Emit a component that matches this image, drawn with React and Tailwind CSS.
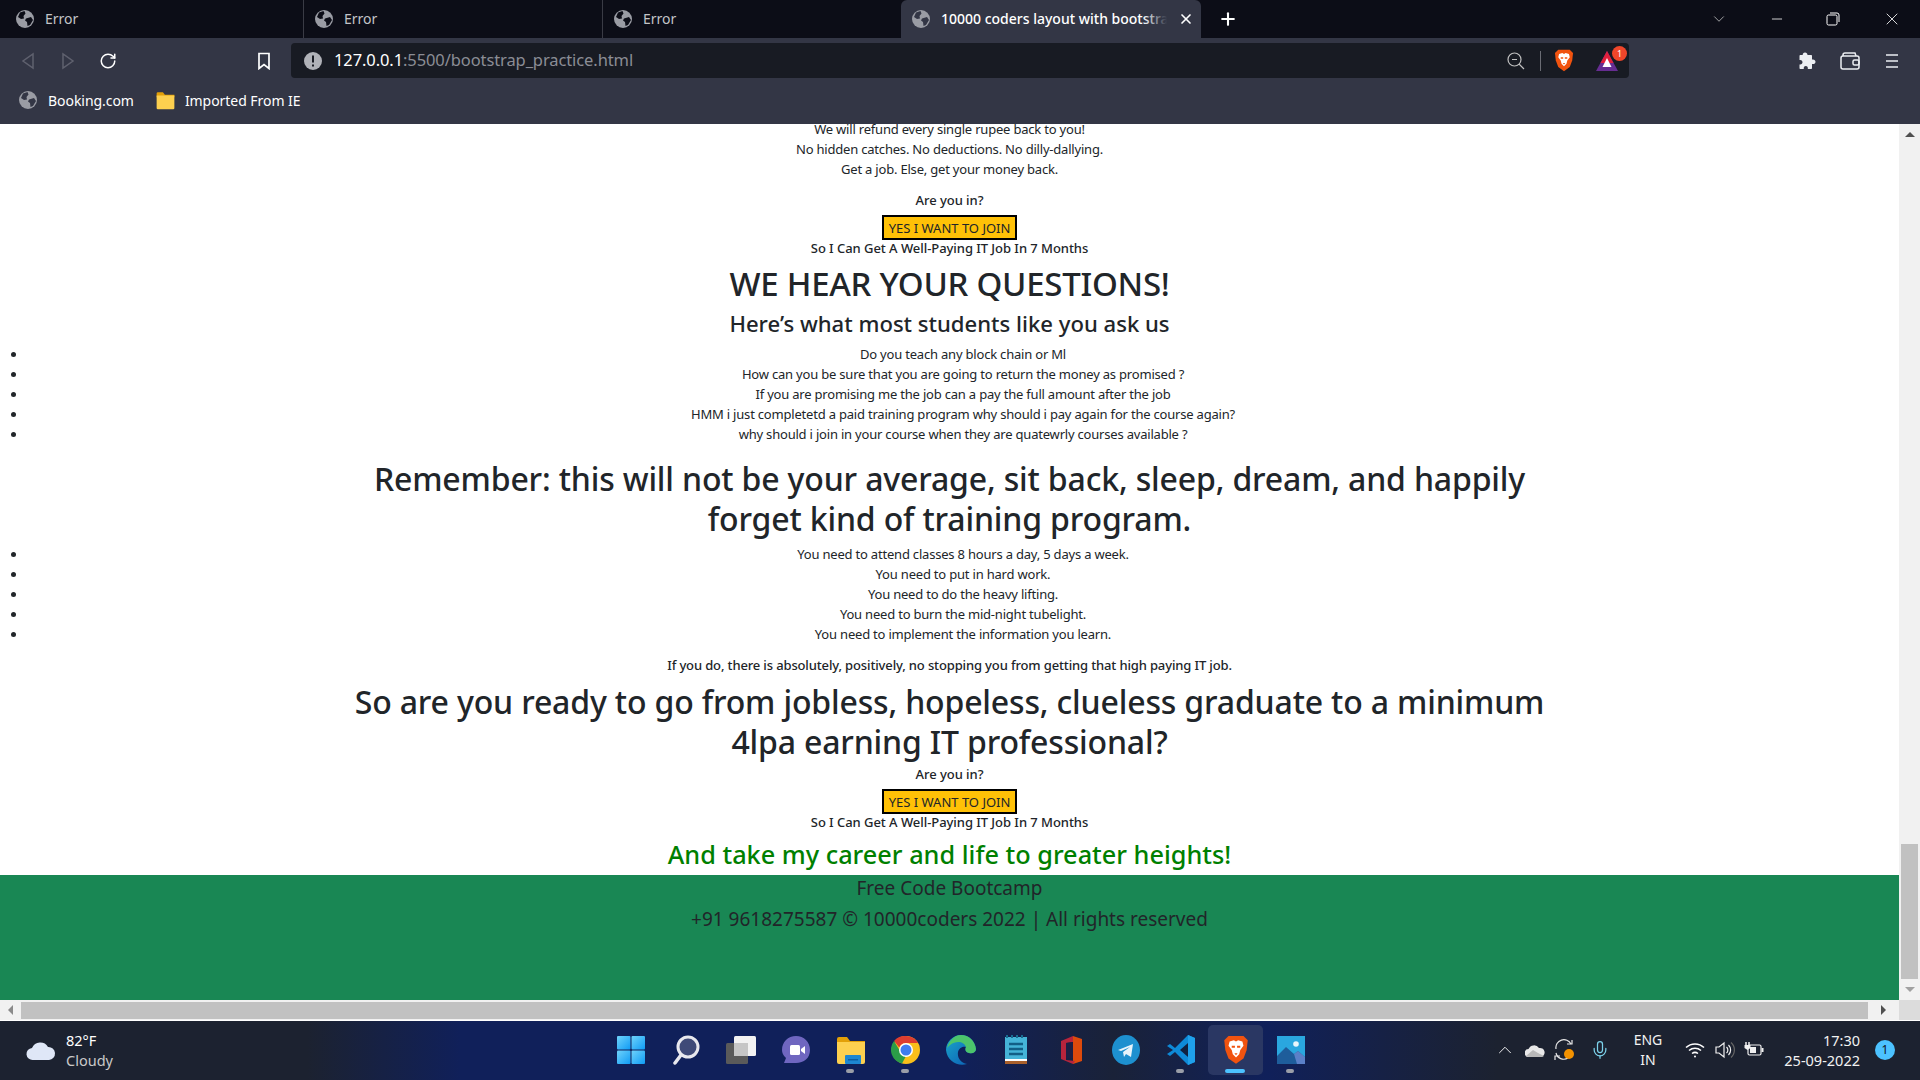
import { ChevronDown, ChevronUp, Minus, Plus, RotateCw, X, Mic } from 'lucide-react';

const FONT = "font-['Noto_Sans','Open_Sans',sans-serif]";
const BODY = 'text-[13px] leading-[20px] tracking-[-0.2px]';
const BOLD = 'text-[13px] leading-[20px] font-medium tracking-[-0.05px]';
const BIG = 'text-[32px] leading-[40px] font-medium tracking-[-0.16px]';

/* --- browser chrome icons --- */
function Globe({ size = 18, fill = '#9a9ca4', cut = '#0c0d17' }) {
  return (
    <svg width={size} height={size} viewBox="0 0 18 18" className="shrink-0">
      <circle cx="9" cy="9" r="9" fill={fill} />
      <path d="M4 2.500 8.500 1l1 2.500-2 2.500.5 2.500-3 .5L2 7z" fill={cut} />
      <path d="M10 8.500l5-1.500 2 3-3 5-2.500 1-.5-4-2-1.500z" fill={cut} />
    </svg>
  );
}

function BraveLion({ size = 24 }) {
  return (
    <svg width={size} height={size * 1.15} viewBox="0 0 24 28">
      <path d="M5 1h14l4 4-1 9-3 8-7 5-7-5-3-8-1-9z" fill="#f1530f" />
      <path d="M6 6l4-1 2 1 2-1 4 1 1 4-3 4-1 4-3 3-3-3-1-4-3-4z" fill="#fff" />
      <path d="M8 10h3v2H8zM13 10h3v2h-3zM10.500 17h3l-1.500 2z" fill="#f1530f" />
    </svg>
  );
}

function BatIcon() {
  return (
    <svg width="24" height="22" viewBox="0 0 24 22">
      <path d="M12 1 23 21H1z" fill="#662d91" />
      <path d="M12 1 18.500 13h-13z" fill="#e0203c" />
      <path d="M12 8l4.500 9h-9z" fill="#fff" />
    </svg>
  );
}

function PuzzleIcon() {
  return (
    <svg width="20" height="20" viewBox="0 0 20 20" fill="#eceef2">
      <path d="M8 1.500c1.500 0 2.500 1 2.500 2.500H14c.6 0 1 .4 1 1v3.500c2-.5 3.500.6 3.500 2.200S17 13.500 15 13v4c0 .6-.4 1-1 1h-3.200c.4-2-.6-3-2-3s-2.400 1-2 3H3.500c-.6 0-1-.4-1-1v-3.500c2 .4 3-.8 3-2.200s-1-2.600-3-2.200V5c0-.6.400-1 1-1h2.200C5.700 2.500 6.500 1.500 8 1.500z" />
    </svg>
  );
}

function WalletIcon() {
  return (
    <svg width="20" height="18" viewBox="0 0 20 18" fill="none" stroke="#eceef2" strokeWidth="1.500">
      <path d="M3 4V3a2 2 0 0 1 2-2h10l1 3" />
      <rect x="1" y="4" width="18" height="13" rx="2" />
      <rect x="13" y="8" width="6" height="5" rx="1.500" />
    </svg>
  );
}

function ZoomOutIcon() {
  return (
    <svg width="18" height="18" viewBox="0 0 18 18" fill="none" stroke="#c0c0c0" strokeWidth="1.200">
      <circle cx="7.500" cy="7.500" r="6.500" />
      <path d="M12 12l5 5M5 7.500h5" />
    </svg>
  );
}

/* --- taskbar icons --- */
function StartIcon() {
  return (
    <svg width="30" height="30" viewBox="0 0 30 30">
      <defs>
        <linearGradient id="win" x1="0" y1="0" x2="1" y2="1">
          <stop offset="0" stopColor="#6fd3fb" />
          <stop offset="1" stopColor="#0f9bf5" />
        </linearGradient>
      </defs>
      <rect x="1" y="1" width="13.500" height="13.500" rx="1" fill="url(#win)" />
      <rect x="15.500" y="1" width="13.500" height="13.500" rx="1" fill="url(#win)" />
      <rect x="1" y="15.500" width="13.500" height="13.500" rx="1" fill="url(#win)" />
      <rect x="15.500" y="15.500" width="13.500" height="13.500" rx="1" fill="url(#win)" />
    </svg>
  );
}

function SearchTask() {
  return (
    <svg width="30" height="30" viewBox="0 0 30 30">
      <circle cx="17" cy="12" r="10" fill="#3f4a78" stroke="#e8e8ee" strokeWidth="3" />
      <path d="M10 20 4 28" stroke="#e8e8ee" strokeWidth="3.500" strokeLinecap="round" />
    </svg>
  );
}

function TaskView() {
  return (
    <svg width="32" height="30" viewBox="0 0 32 30">
      <rect x="9" y="1" width="22" height="20" rx="1.500" fill="#f2f2f2" />
      <rect x="1" y="8" width="22" height="21" rx="1.500" fill="#5a5a5a" />
      <rect x="9" y="8" width="14" height="13" fill="#c6c6c6" />
    </svg>
  );
}

function ChatIcon() {
  return (
    <svg width="30" height="30" viewBox="0 0 30 30">
      <path d="M15 1c8 0 14 6 14 14s-6 13-14 13H3l2-5C2 20 1 18 1 15 1 7 7 1 15 1z" fill="#6f66c0" />
      <rect x="9" y="10" width="10" height="10" rx="1.500" fill="#fff" />
      <path d="M20 14l4-3v8l-4-3z" fill="#fff" />
    </svg>
  );
}

function FolderIcon({ size = 30 }) {
  return (
    <svg width={size} height={size} viewBox="0 0 30 30">
      <path d="M1 4a2 2 0 0 1 2-2h8l3 4h15v4H1z" fill="#e3a008" />
      <path d="M1 7h28v20a2 2 0 0 1-2 2H3a2 2 0 0 1-2-2z" fill="#fdd04f" />
      {size > 20 && <rect x="9" y="20" width="16" height="9" rx="1" fill="#1d86d1" />}
      {size > 20 && <rect x="12" y="24" width="10" height="1.500" fill="#0d5ea3" />}
    </svg>
  );
}

function ChromeIcon() {
  return (
    <svg width="30" height="30" viewBox="0 0 30 30">
      <circle cx="15" cy="15" r="14" fill="#f9bf1a" />
      <path d="M15 1a14 14 0 0 1 12.100 7H15a7 7 0 0 0-6.600 4.600L3 6a14 14 0 0 1 12-5z" fill="#dd3d30" />
      <path d="M3 6l6 10 5.500 6-3.500 6.400A14 14 0 0 1 3 6z" fill="#2b9d48" />
      <circle cx="15" cy="15" r="7" fill="#fff" />
      <circle cx="15" cy="15" r="5.500" fill="#3f7df0" />
    </svg>
  );
}

function EdgeIcon() {
  return (
    <svg width="30" height="32" viewBox="0 0 30 32">
      <defs>
        <linearGradient id="edge" x1="0" y1="0" x2="1" y2="1">
          <stop offset="0" stopColor="#1aa7c9" />
          <stop offset="1" stopColor="#0b59b4" />
        </linearGradient>
      </defs>
      <path d="M15 1C23 1 29 7 30 15c0 3-3 5-7 4s-4-4-3-6c-2-1-7 0-8 5-1 6 3 11 9 12-9 3-20-3-21-14C0 8 7 1 15 1z" fill="url(#edge)" />
      <path d="M15 1c8 0 14 6 15 14 0 3-3 5-7 4s-4-4-3-6c-1-3-4-5-8-5-4 0-8 2-11 6C3 7 8 1 15 1z" fill="#4cc46b" />
    </svg>
  );
}

function NotepadIcon() {
  return (
    <svg width="24" height="30" viewBox="0 0 24 30">
      <rect x="1" y="2" width="22" height="27" fill="#45b4d8" />
      <rect x="1" y="26" width="22" height="3" fill="#a9602b" />
      <rect x="1" y="24" width="22" height="2" fill="#fff" />
      <path d="M3 0v3M8 0v3M13 0v3M18 0v3" stroke="#186c90" strokeWidth="2" />
      <path d="M5 9h14M5 14h14M5 19h14" stroke="#125f86" strokeWidth="2.500" />
    </svg>
  );
}

function OfficeIcon() {
  return (
    <svg width="24" height="30" viewBox="0 0 24 30">
      <path d="M14 1l9 3v22l-9 3z" fill="#dd4a0c" />
      <path d="M14 1 2 6v18l12 5 2-3-9-1V8l7-1z" fill="#b8243c" />
      <path d="M7 8l7-1v16l-7 1z" fill="#1d1f45" />
    </svg>
  );
}

function TelegramIcon() {
  return (
    <svg width="28" height="30" viewBox="0 0 28 30">
      <ellipse cx="14" cy="15" rx="14" ry="15" fill="#1d90cf" />
      <path d="M6 15 21 9l-2 13-5-3-2 3-1-5 7-5-9 4z" fill="#e7f4fb" />
    </svg>
  );
}

function VsCodeIcon() {
  return (
    <svg width="30" height="32" viewBox="0 0 30 32">
      <path d="M22 1l7 3v24l-7 3L9 18l-5 4-3-2 6-4-6-4 3-2 5 4z" fill="#0e8ad8" />
      <path d="M22 9v14l-8-7z" fill="#10203f" />
      <path d="M22 1l7 3v24l-7 3z" fill="#1fa0ea" />
    </svg>
  );
}

function PhotosIcon() {
  return (
    <svg width="28" height="28" viewBox="0 0 28 28">
      <rect width="28" height="28" fill="#2aa7df" />
      <circle cx="19" cy="8" r="2.800" fill="#e8f6fc" />
      <path d="M0 28V20l9-9 8 7 4-3 7 6v7z" fill="#1e5d9b" />
      <path d="M17 18l4-3 7 6v7H20z" fill="#5b80c8" />
    </svg>
  );
}

/* --- tray icons --- */
function OneDrive() {
  return (
    <svg width="20" height="14" viewBox="0 0 20 14">
      <path d="M4 14a4 4 0 0 1-.5-8A6 6 0 0 1 14 5a4.500 4.500 0 0 1 2 9z" fill="#e8e8e8" />
      <path d="M1 13l7-6 5 3 6 3-2 1H4z" fill="#b8b8b8" />
    </svg>
  );
}

function SyncIcon() {
  return (
    <svg width="22" height="22" viewBox="0 0 22 22" fill="none" stroke="#e8e8e8" strokeWidth="1.200">
      <path d="M2 10A8 8 0 0 1 17 5" />
      <path d="M13 5h5V1" />
      <path d="M14 19A8 8 0 0 1 2 14" />
      <path d="M6 17H1v4" />
      <circle cx="15" cy="15" r="5" fill="#f39200" stroke="none" />
    </svg>
  );
}

function WifiIcon() {
  return (
    <svg width="20" height="16" viewBox="0 0 20 16" fill="none" stroke="#fff" strokeWidth="1.500">
      <path d="M1 5.500a13 13 0 0 1 18 0" />
      <path d="M4 8.500a9 9 0 0 1 12 0" />
      <path d="M7 11.500a5 5 0 0 1 6 0" />
      <circle cx="10" cy="14.500" r="1" fill="#fff" stroke="none" />
    </svg>
  );
}

function VolumeIcon() {
  return (
    <svg width="20" height="18" viewBox="0 0 20 18" fill="none" stroke="#f0f0f0" strokeWidth="1.200">
      <path d="M1 6h3l5-4v14l-5-4H1z" />
      <path d="M11.500 6a4 4 0 0 1 0 6" />
      <path d="M13.500 4a7 7 0 0 1 0 10" />
      <path d="M16 1.500a10 10 0 0 1 0 15" stroke="#666" />
    </svg>
  );
}

function BatteryIcon() {
  return (
    <svg width="20" height="16" viewBox="0 0 20 16" fill="none" stroke="#f0f0f0" strokeWidth="1.200">
      <rect x="4" y="3" width="13" height="10" rx="1.500" />
      <rect x="17.500" y="6" width="2" height="4" fill="#f0f0f0" stroke="none" />
      <rect x="6" y="5" width="6" height="6" fill="#f0f0f0" stroke="none" />
      <path d="M2 0v3M5 0v3" strokeWidth="1.500" />
      <path d="M0.500 3h6v3l-3 2-3-2z" fill="#f0f0f0" stroke="none" />
    </svg>
  );
}

/* --- bits --- */
function Tab({ className }) {
  return (
    <div className={`flex items-center h-[38px] gap-[11px] ${className}`}>
      <Globe />
      <span className="text-[14px] leading-[20px] pb-[1px] text-[#c3c4c8]">Error</span>
    </div>
  );
}

function JoinBlock() {
  return (
    <>
      <p className={BOLD}>Are you in?</p>
      <button className="mt-[5px] block mx-auto w-[135px] h-[25px] bg-[#ffc107] border-2 border-black text-[13px] leading-[20px] tracking-normal text-[#212529]">
        YES I WANT TO JOIN
      </button>
      <p className={`${BOLD} -mt-[2px]`}>So I Can Get A Well-Paying IT Job In 7 Months</p>
    </>
  );
}

const QUESTIONS = [
  'Do you teach any block chain or Ml',
  'How can you be sure that you are going to return the money as promised ?',
  'If you are promising me the job can a pay the full amount after the job',
  'HMM i just completetd a paid training program why should i pay again for the course again?',
  'why should i join in your course when they are quatewrly courses available ?',
];

const NEEDS = [
  'You need to attend classes 8 hours a day, 5 days a week.',
  'You need to put in hard work.',
  'You need to do the heavy lifting.',
  'You need to burn the mid-night tubelight.',
  'You need to implement the information you learn.',
];

const TASK_ICONS = [
  { key: 'start', icon: <StartIcon /> },
  { key: 'search', icon: <SearchTask /> },
  { key: 'view', icon: <TaskView /> },
  { key: 'chat', icon: <ChatIcon /> },
  { key: 'files', icon: <FolderIcon />, dot: true },
  { key: 'chrome', icon: <ChromeIcon />, dot: true },
  { key: 'edge', icon: <EdgeIcon /> },
  { key: 'notes', icon: <NotepadIcon /> },
  { key: 'office', icon: <OfficeIcon /> },
  { key: 'telegram', icon: <TelegramIcon /> },
  { key: 'vscode', icon: <VsCodeIcon />, dot: true },
  { key: 'brave', icon: <BraveLion size={26} />, active: true },
  { key: 'photos', icon: <PhotosIcon />, dot: true },
];

export default function App() {
  return (
    <div className={`w-[1920px] h-[1080px] overflow-hidden flex flex-col bg-white ${FONT}`}>
      {/* tab strip */}
      <div className="h-[38px] shrink-0 flex items-center bg-[#0c0d17]">
        <Tab className="w-[304px] pl-[16px] border-r border-[#3a3b45]" />
        <Tab className="w-[299px] pl-[11px] border-r border-[#3a3b45]" />
        <Tab className="w-[298px] pl-[11px]" />
        <div className="w-[300px] h-[38px] rounded-t-[6px] bg-[#333645] flex items-center pl-[11px] gap-[11px]">
          <Globe cut="#333645" />
          <div className="relative w-[226px] h-[20px] overflow-hidden">
            <span className="block text-[14px] leading-[20px] font-medium text-white whitespace-nowrap">10000 coders layout with bootstrap</span>
            <span className="absolute right-0 top-0 w-[24px] h-[20px] bg-gradient-to-r from-transparent to-[#333645]" />
          </div>
          <X size={16} color="#fff" strokeWidth={2.500} />
        </div>
        <Plus size={20} color="#fff" strokeWidth={2.500} className="ml-[17px]" />
        <div className="ml-auto flex items-center">
          <ChevronDown size={18} color="#d0d0d0" strokeWidth={1} className="mr-[41px]" />
          <Minus size={16} color="#fff" strokeWidth={1.200} className="mr-[41px]" />
          <svg width="14" height="14" viewBox="0 0 14 14" fill="none" stroke="#fff" className="mr-[42px]">
            <rect x="1" y="3" width="10" height="10" rx="1.500" />
            <path d="M4 1h7a2 2 0 0 1 2 2v7" />
          </svg>
          <X size={20} color="#fff" strokeWidth={1} className="mr-[18px]" />
        </div>
      </div>

      {/* toolbar */}
      <div className="h-[40px] shrink-0 flex items-start bg-[#333645] pt-[5px]">
        <div className="w-[291px] h-[35px] flex items-center">
          <svg width="14" height="18" viewBox="0 0 14 18" fill="none" stroke="#5f616e" strokeWidth="1.500" className="ml-[21px]">
            <path d="M12 2v14L2 9z" />
          </svg>
          <svg width="14" height="18" viewBox="0 0 14 18" fill="none" stroke="#5f616e" strokeWidth="1.500" className="ml-[26px]">
            <path d="M2 2v14l10-7z" />
          </svg>
          <RotateCw size={18} color="#fff" strokeWidth={2} className="ml-[24px]" />
          <svg width="14" height="18" viewBox="0 0 14 18" fill="none" stroke="#fff" strokeWidth="1.700" className="ml-[140px]">
            <path d="M2 1.500h10v15l-5-4-5 4z" />
          </svg>
        </div>
        <div className="w-[1338px] h-[35px] rounded-[4px] bg-[#181b23] flex items-center pl-[13px] pr-[6px]">
          <svg width="18" height="18" viewBox="0 0 18 18" className="shrink-0">
            <circle cx="9" cy="9" r="9" fill="#b0b2b8" />
            <rect x="8" y="3.500" width="2" height="7" fill="#181b23" />
            <rect x="8" y="12.500" width="2" height="2" fill="#181b23" />
          </svg>
          <span className="ml-[12px] text-[16.500px] tracking-[-0.1px]">
            <span className="text-white">127.0.0.1</span>
            <span className="text-[#8b8d95]">:5500/bootstrap_practice.html</span>
          </span>
          <div className="ml-auto flex items-center">
            <ZoomOutIcon />
            <div className="w-px h-[20px] bg-[#6a6c74] ml-[15px] mr-[13px]" />
            <BraveLion size={20} />
            <div className="relative ml-[21px] mr-[4px]">
              <BatIcon />
              <span className="absolute -top-[4px] -right-[8px] w-[15px] h-[15px] rounded-full bg-[#f0462a] text-white text-[9px] leading-[15px] text-center">1</span>
            </div>
          </div>
        </div>
        <div className="flex-1 h-[35px] flex items-center">
          <span className="ml-[168px]"><PuzzleIcon /></span>
          <span className="ml-[23px]"><WalletIcon /></span>
          <svg width="14" height="18" viewBox="0 0 14 18" stroke="#eceef2" strokeWidth="1.700" className="ml-[25px] shrink-0">
            <path d="M1 3h12M1 9h12M1 15h12" />
          </svg>
        </div>
      </div>

      {/* bookmarks */}
      <div className="h-[46px] shrink-0 flex items-center bg-[#333645] pl-[19px] pb-[2px] text-[14px] tracking-[-0.05px] text-white">
        <Globe cut="#333645" />
        <span className="ml-[11px]">Booking.com</span>
        <span className="ml-[22px]"><FolderIcon size={19} /></span>
        <span className="ml-[10px]">Imported From IE</span>
      </div>

      {/* page + vertical scrollbar */}
      <div className="flex-1 flex min-h-0">
        <div className="w-[1899px] flex flex-col min-h-0 overflow-hidden">
          <div className="flex-1 min-h-0 overflow-hidden text-center text-[#212529]">
            <div className="pt-[1px] -mt-[6px]">
              <p className={BODY}>We will refund every single rupee back to you!</p>
              <p className={BODY}>No hidden catches. No deductions. No dilly-dallying.</p>
              <p className={BODY}>Get a job. Else, get your money back.</p>
              <div className="h-[11px]" />
              <JoinBlock />
              <h1 className="mt-[6px] text-[33px] leading-[40px] font-medium tracking-[-0.26px]">WE HEAR YOUR QUESTIONS!</h1>
              <h2 className="mt-[3px] text-[22.100px] leading-[32px] font-medium">Here’s what most students like you ask us</h2>
              <ul className="mt-[5px] list-disc pl-[27px]">
                {QUESTIONS.map(q => <li key={q} className={BODY}>{q}</li>)}
              </ul>
              <h2 className={`mt-[15px] mx-auto w-[1200px] ${BIG}`}>
                Remember: this will not be your average, sit back, sleep, dream, and happily forget kind of training program.
              </h2>
              <ul className="mt-[5px] list-disc pl-[27px]">
                {NEEDS.map(n => <li key={n} className={BODY}>{n}</li>)}
              </ul>
              <p className="mt-[11px] text-[13px] leading-[20px] font-medium tracking-[-0.14px]">
                If you do, there is absolutely, positively, no stopping you from getting that high paying IT job.
              </p>
              <h2 className={`mt-[7px] mx-auto w-[1200px] ${BIG}`}>
                So are you ready to go from jobless, hopeless, clueless graduate to a minimum 4lpa earning IT professional?
              </h2>
              <div className="h-[2px]" />
              <JoinBlock />
              <h3 className="mt-[6px] text-[25.300px] leading-[32px] font-medium text-[#008000]">And take my career and life to greater heights!</h3>
            </div>
            <div className="mt-[5px] h-[140px] overflow-hidden bg-[#198754] text-[19px] leading-[31px]">
              <p className="-mt-[2px]">Free Code Bootcamp</p>
              <p>+91 9618275587 © 10000coders 2022 | All rights reserved</p>
            </div>
          </div>
          {/* horizontal scrollbar */}
          <div className="h-[20px] shrink-0 bg-[#f1f1f1] flex items-center">
            <span className="w-[21px] flex justify-center">
              <span className="w-0 h-0 border-y-[5px] border-y-transparent border-r-[5px] border-r-[#8a8a8a]" />
            </span>
            <div className="w-[1847px] h-[17px] bg-[#c1c1c1]" />
            <span className="flex-1 flex justify-center">
              <span className="w-0 h-0 border-y-[5px] border-y-transparent border-l-[5px] border-l-[#505050]" />
            </span>
          </div>
        </div>
        <div className="w-[21px] bg-[#f1f1f1] flex flex-col items-center relative">
          <div className="h-[20px] flex items-center">
            <span className="w-0 h-0 border-x-[5px] border-x-transparent border-b-[5px] border-b-[#505050]" />
          </div>
          <div className="h-[700px]" />
          <div className="w-[17px] h-[135px] bg-[#c1c1c1]" />
          <div className="h-[20px] flex items-center">
            <span className="w-0 h-0 border-x-[5px] border-x-transparent border-t-[5px] border-t-[#a0a0a0]" />
          </div>
          <div className="absolute bottom-0 left-0 w-[21px] h-[20px] bg-[#dcdcdc]" />
        </div>
      </div>

      {/* windows taskbar */}
      <div className="h-[60px] shrink-0 border-t border-white pb-px flex items-center bg-[linear-gradient(90deg,#1c2230_0%,#1c2230_16%,#10205a_24%,#10205a_50%,#1a2238_58%,#10205a_66%,#1c2230_78%,#1c2230_100%)] text-[#f2f2f2]">
        <div className="w-[603px] shrink-0 flex items-center pl-[26px]">
          <svg width="30" height="24" viewBox="0 0 30 24">
            <path d="M7 22a6 6 0 0 1-1-12A9 9 0 0 1 22 9a6.500 6.500 0 0 1 1 13z" fill="#dfe7f7" />
          </svg>
          <div className="ml-[10px] text-[14.500px] leading-[20px]">
            <p className="text-white">82°F</p>
            <p className="text-[#c9c9c9]">Cloudy</p>
          </div>
        </div>
        <div className="flex items-center shrink-0">
          {TASK_ICONS.map(t => (
            <div key={t.key} className={`relative w-[55px] h-[50px] flex items-center justify-center rounded-[5px] ${t.active ? 'bg-[#2a3763]' : ''}`}>
              {t.icon}
              {t.dot && <span className="absolute bottom-[2px] left-[23px] w-[8px] h-[4px] rounded-full bg-[#9a9ea8]" />}
              {t.active && <span className="absolute bottom-[2px] left-[17px] w-[20px] h-[4px] rounded-full bg-[#4cc2ff]" />}
            </div>
          ))}
        </div>
        <div className="w-[172px] shrink-0" />
        <div className="flex items-center shrink-0 text-[14px]">
          <span className="w-[30px] flex justify-center"><ChevronUp size={22} color="#fff" strokeWidth={1} /></span>
          <span className="w-[30px] flex justify-center"><OneDrive /></span>
          <span className="w-[30px] flex justify-center"><SyncIcon /></span>
          <span className="w-[40px] flex justify-center"><Mic size={20} color="#7cd2ea" strokeWidth={1.500} /></span>
          <span className="w-[56px] text-center leading-[20px]">ENG<br />IN</span>
          <span className="w-[38px] flex justify-center"><WifiIcon /></span>
          <span className="-ml-[4px] w-[30px] flex justify-center"><VolumeIcon /></span>
          <span className="-ml-px w-[30px] flex justify-center"><BatteryIcon /></span>
          <span className="-ml-px w-[92px] text-[14.500px] text-right leading-[20px] whitespace-nowrap">17:30<br />25-09-2022</span>
          <span className="ml-[15px] w-[20px] h-[20px] rounded-full bg-[#4cc2ff] text-[#10131c] text-[12px] leading-[20px] text-center">1</span>
        </div>
      </div>
    </div>
  );
}
